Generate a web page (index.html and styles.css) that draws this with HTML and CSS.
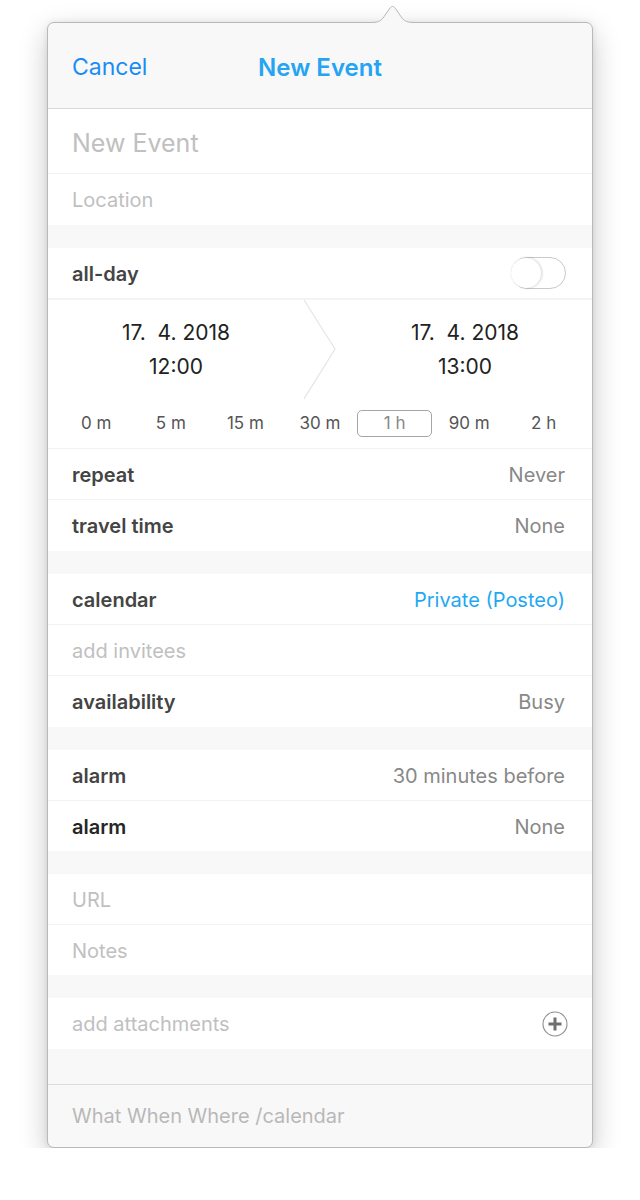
FILE: index.html
```html
<!DOCTYPE html>
<html>
<head>
<meta charset="utf-8">
<link rel="stylesheet" href="styles.css">
</head>
<body>
<div class="page">
  <div class="card">
    <svg class="arrow" width="46" height="22" viewBox="0 0 46 22">
      <path d="M0 20.5 C8 20.5 10 19.5 13 16 L20 6 C21.5 3.8 23.5 3.8 25 6 L32 16 C35 19.5 37 20.5 46 20.5 L46 22 L0 22 Z" fill="#f8f8f8"/>
      <path d="M0 20.5 C8 20.5 10 19.5 13 16 L20 6 C21.5 3.8 23.5 3.8 25 6 L32 16 C35 19.5 37 20.5 46 20.5" fill="none" stroke="#b9b9b9" stroke-width="1"/>
    </svg>
    <header class="header">
      <span class="cancel">Cancel</span>
      <span class="title">New Event</span>
      <span></span>
    </header>

    <section class="group">
      <div class="row title-row"><span class="ph big">New Event</span></div>
      <div class="row"><span class="ph">Location</span></div>
    </section>

    <section class="group">
      <div class="row">
        <span class="label">all-day</span>
        <span class="toggle"><span class="knob"></span></span>
      </div>
      <div class="dates">
        <div class="date-col">
          <div>17.&nbsp; 4. 2018</div>
          <div>12:00</div>
        </div>
        <svg class="chev" width="34" height="100" viewBox="0 0 34 100">
          <path d="M0 0 L31 49 L0 99" fill="none" stroke="#e4e4ea" stroke-width="1.2"/>
        </svg>
        <div class="date-col">
          <div>17.&nbsp; 4. 2018</div>
          <div>13:00</div>
        </div>
      </div>
      <div class="durations">
        <span>0 m</span>
        <span>5 m</span>
        <span>15 m</span>
        <span>30 m</span>
        <span class="sel">1 h</span>
        <span>90 m</span>
        <span>2 h</span>
      </div>
      <div class="row"><span class="label">repeat</span><span class="value">Never</span></div>
      <div class="row"><span class="label">travel time</span><span class="value">None</span></div>
    </section>

    <section class="group">
      <div class="row"><span class="label">calendar</span><span class="value blue">Private (Posteo)</span></div>
      <div class="row"><span class="ph">add invitees</span></div>
      <div class="row"><span class="label">availability</span><span class="value">Busy</span></div>
    </section>

    <section class="group">
      <div class="row"><span class="label">alarm</span><span class="value">30 minutes before</span></div>
      <div class="row short"><span class="label dark">alarm</span><span class="value">None</span></div>
    </section>

    <section class="group">
      <div class="row"><span class="ph">URL</span></div>
      <div class="row short"><span class="ph">Notes</span></div>
    </section>

    <section class="group last">
      <div class="row">
        <span class="ph">add attachments</span>
        <svg class="plus" width="26" height="26" viewBox="0 0 26 26">
          <circle cx="13" cy="13" r="12" fill="#fff" stroke="#8e8e8e" stroke-width="1.1"/>
          <path d="M13 6.5 V19.5 M6.5 13 H19.5" stroke="#6f6f6f" stroke-width="3"/>
        </svg>
      </div>
    </section>

    <footer class="footer">What When Where /calendar</footer>
  </div>
</div>
</body>
</html>
```

FILE: styles.css
```css
html, body {
  margin: 0;
  padding: 0;
  background: #ffffff;
}
body {
  font-family: Inter, "Noto Sans", "Liberation Sans", sans-serif;
  color: #3c3c3c;
}
.page {
  padding: 22px 47px 0 47px;
}
.card {
  position: relative;
  background: #f8f8f8;
  border: 1px solid #b9b9b9;
  border-radius: 7px;
  box-shadow: 0 10px 28px rgba(0, 0, 0, 0.22), 0 0 6px rgba(0, 0, 0, 0.08);
}
.arrow {
  position: absolute;
  top: -21px;
  left: 322px;
}
.header {
  height: 85px;
  display: grid;
  grid-template-columns: 1fr auto 1fr;
  align-items: center;
  padding: 0 24px;
  border-bottom: 1px solid #d8d8d8;
  border-radius: 7px 7px 0 0;
}
.cancel {
  font-size: 23px;
  color: #1a8df5;
  padding-top: 3px;
}
.title {
  font-size: 24px;
  font-weight: 600;
  color: #25a4f4;
  padding-top: 3px;
}
.group {
  background: #ffffff;
  margin-bottom: 23px;
}
.group.last {
  margin-bottom: 35px;
}
.row {
  box-sizing: border-box;
  height: 51px;
  display: flex;
  align-items: center;
  justify-content: space-between;
  padding: 1px 27px 0 24px;
  border-bottom: 1px solid #f2f2f2;
  font-size: 20px;
}
.row:last-child {
  border-bottom: none;
}
.row.short {
  height: 50px;
}
.title-row {
  height: 65px;
  padding-top: 3px;
}
.ph {
  color: #c0c0c0;
}
.ph.big {
  font-size: 25px;
}
.label {
  font-weight: 600;
  color: #444444;
}
.label.dark {
  color: #262626;
}
.value {
  color: #888888;
}
.value.blue {
  color: #1fa8f2;
}
.toggle {
  width: 53px;
  height: 30px;
  border: 1px solid #c9c9c9;
  border-radius: 16px;
  display: flex;
  align-items: center;
  margin-right: -1px;
  margin-top: -2px;
}
.knob {
  width: 30px;
  height: 30px;
  border-radius: 50%;
  background: #ffffff;
  box-shadow: 1px 0 3px rgba(0, 0, 0, 0.18);
  margin-left: -1px;
}
.dates {
  display: grid;
  grid-template-columns: 256px 34px 1fr;
  height: 98px;
  border-top: 1px solid #f4f4f4;
}
.date-col {
  display: flex;
  flex-direction: column;
  align-items: center;
  padding-top: 20px;
  gap: 9px;
  font-size: 21px;
  color: #222222;
  line-height: 25px;
}
.chev {
  display: block;
}
.durations {
  display: grid;
  grid-template-columns: repeat(7, 1fr);
  padding: 0 11px;
  height: 50px;
  align-items: center;
  border-bottom: 1px solid #f2f2f2;
  font-size: 17px;
  color: #555555;
}
.durations span {
  text-align: center;
  line-height: 25px;
}
.durations .sel {
  border: 1px solid #a6a6a6;
  border-radius: 5px;
  color: #888888;
}
.plus {
  display: block;
  margin-right: -3px;
}
.footer {
  height: 62px;
  border-top: 1px solid #dcdcdc;
  display: flex;
  align-items: center;
  padding: 0 24px;
  font-size: 20px;
  color: #b8b8b8;
  border-radius: 0 0 7px 7px;
}
```
